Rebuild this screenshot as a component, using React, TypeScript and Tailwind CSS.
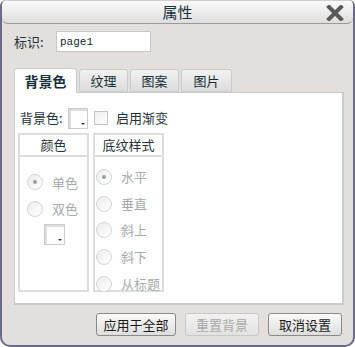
const cjk = { fontFamily: '"Noto Sans CJK SC", "Noto Sans", sans-serif' };

const Radio = ({ checked, label }: { checked?: boolean; label: string }) => (
  <div className="flex items-center gap-[9px] h-[26.7px] text-[13px] text-[#a3abab]">
    <span className="w-[16px] h-[16px] rounded-full border border-[#d2d6d6] bg-gradient-to-br from-[#ececec] to-white flex items-center justify-center">
      {checked && <span className="w-[4px] h-[4px] rounded-full bg-[#9aa0a0]" />}
    </span>
    <span>{label}</span>
  </div>
);

const Swatch = ({ w = 20, h = 21 }: { w?: number; h?: number }) => (
  <div
    className="relative bg-white border border-[#c8cccc] shadow-[inset_2px_2px_1px_#dcdcdc]"
    style={{ width: w, height: h }}
  >
    <span className="absolute right-[2px] bottom-[3px] w-0 h-0 border-x-[2px] border-x-transparent border-t-[2px] border-t-[#333]" />
  </div>
);

export default function App() {
  return (
    <div className="w-[355px] h-[347px] bg-white" style={cjk}>
      <div className="w-[355px] h-[347px] flex flex-col bg-[#e2dfdd] border-x-2 border-b-2 border-[#6c6c88] rounded-b-[10px] rounded-t-[6px] overflow-hidden">
        {/* title */}
        <div className="h-[24px] shrink-0 relative flex items-center justify-center bg-gradient-to-b from-[#fbfbfb] to-[#dedede] border-b border-[#9a9a9a] rounded-b-[6px] border-t border-t-[#cfcfcf]">
          <span className="text-[15px] text-[#17303a]">属性</span>
          <svg className="absolute right-[9px] top-[4px]" width="18" height="16" viewBox="0 0 18 16">
            <path d="M3 2 L15 14 M15 2 L3 14" stroke="#5a5a5a" strokeWidth="4" strokeLinecap="square" />
          </svg>
        </div>

        {/* id row */}
        <div className="flex items-center mt-[7px] ml-[12px] h-[21px]">
          <span className="text-[13px] text-[#1f3338] w-[42px]">标识:</span>
          <div className="w-[95px] h-[21px] bg-white border border-[#c9c9c9] flex items-end pl-[3px] pb-[1px]">
            <span className="text-[11px] text-[#0f2a33]" style={{ fontFamily: '"Liberation Mono", "Courier New", monospace' }}>page1</span>
          </div>
        </div>

        {/* tabs */}
        <div className="flex items-end ml-[12px] mt-[16px] h-[24px] gap-[2px] relative z-10">
          <div className="w-[63px] h-[25px] bg-white border border-[#c8cccc] border-b-0 rounded-t-[3px] flex items-center justify-center text-[14px] font-bold text-[#163038] -mb-px">背景色</div>
          <div className="w-[49px] h-[23px] bg-gradient-to-b from-[#f2f2f2] to-[#dcdcdc] border border-[#c8cccc] rounded-t-[3px] flex items-center justify-center text-[13px] text-[#163038]">纹理</div>
          <div className="w-[49px] h-[23px] bg-gradient-to-b from-[#f2f2f2] to-[#dcdcdc] border border-[#c8cccc] rounded-t-[3px] flex items-center justify-center text-[13px] text-[#163038]">图案</div>
          <div className="w-[51px] h-[23px] bg-gradient-to-b from-[#f2f2f2] to-[#dcdcdc] border border-[#c8cccc] rounded-t-[3px] flex items-center justify-center text-[13px] text-[#163038]">图片</div>
        </div>

        {/* panel */}
        <div className="ml-[12px] w-[330px] h-[213px] bg-white border border-[#c8cccc] border-r-2 border-b-2 px-[3px] pt-[14px]">
          <div className="flex items-center h-[22px]">
            <span className="text-[13px] text-[#1f3338] w-[50px] pl-[2px]">背景色:</span>
            <Swatch />
            <span className="ml-[6px] w-[14px] h-[14px] border border-[#c3c7c7] bg-gradient-to-br from-[#ececec] to-white" />
            <span className="ml-[8px] text-[13px] text-[#1f3338]">启用渐变</span>
          </div>

          <div className="flex gap-[4px] mt-[4px]">
            <div className="w-[71px] h-[159px] border-2 border-[#dcdede] flex flex-col">
              <div className="h-[22px] border-b-2 border-[#dcdede] flex items-center justify-center text-[13px] text-[#1f3338]">颜色</div>
              <div className="pl-[7px] pt-[12px]">
                <Radio checked label="单色" />
                <Radio label="双色" />
                <div className="ml-[17px] mt-[2px]">
                  <Swatch w={21} h={21} />
                </div>
              </div>
            </div>
            <div className="w-[71px] h-[159px] border-2 border-[#dcdede] flex flex-col">
              <div className="h-[22px] border-b-2 border-[#dcdede] flex items-center justify-center text-[13px] text-[#1f3338]">底纹样式</div>
              <div className="pl-[1px] pt-[7px]">
                <Radio checked label="水平" />
                <Radio label="垂直" />
                <Radio label="斜上" />
                <Radio label="斜下" />
                <Radio label="从标题" />
              </div>
            </div>
          </div>
        </div>

        {/* buttons */}
        <div className="flex justify-end gap-[9px] pr-[11px] mt-[8px]">
          <button className="w-[80px] h-[23px] rounded-[3px] border border-[#8a8a8a] bg-gradient-to-b from-[#fafafa] to-[#dedede] text-[13px] text-[#1a1a1a]">应用于全部</button>
          <button className="w-[74px] h-[23px] rounded-[3px] border border-[#c8c8c8] bg-gradient-to-b from-[#f2f2f2] to-[#e2e2e2] text-[13px] text-[#a9a9a9]">重置背景</button>
          <button className="w-[74px] h-[23px] rounded-[3px] border border-[#8a8a8a] bg-gradient-to-b from-[#fafafa] to-[#dedede] text-[13px] text-[#1a1a1a]">取消设置</button>
        </div>
      </div>
    </div>
  );
}
